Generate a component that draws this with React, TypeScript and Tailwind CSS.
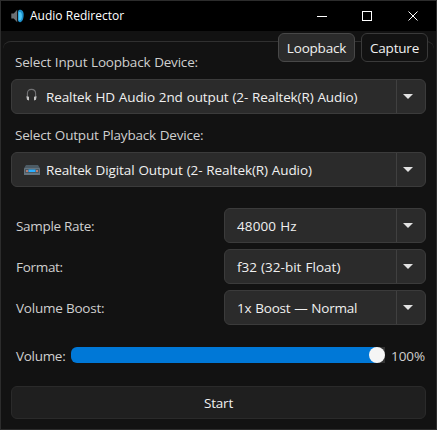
import type { ReactNode } from "react";

function SpeakerIcon() {
  return (
    <svg width="14" height="14" viewBox="0 0 14 14" className="shrink-0">
      <path d="M0.3 4.6h2.4L6.2 0.8v12.4L2.7 9.6H0.3z" fill="#6b7074" />
      <path d="M7 2.2C8.3 0 12 0.2 12.6 4.6c.4 4.2-1 8.6-3.5 8.6-1.4 0-2.1-1.2-2.1-2.2z" fill="#1c8fcb" />
      <path d="M7.6 3.2c2.4-1 3.4 1 3.3 4-.1 3-1.3 4.8-3.3 4.2z" fill="#4cc6f5" />
    </svg>
  );
}

function HeadphonesIcon() {
  return (
    <svg width="16" height="16" viewBox="0 0 16 16" className="relative -top-px shrink-0">
      <path d="M3.4 10V5.5C3.4 2.4 5 1.4 7.5 1.4s4.1 1 4.1 4.1V10" fill="none" stroke="#727274" strokeWidth="1.1" />
      <path d="M2.4 8.2l2.6.6v3.8l-2-.8zM12.6 8.2l-2.6.6v3.8l2-.8z" fill="#c2c2c2" />
    </svg>
  );
}

function DeckIcon() {
  return (
    <svg width="16" height="16" viewBox="0 0 16 16" className="shrink-0">
      <path d="M2 3h12l1.8 3H0.2z" fill="#4c5b65" />
      <rect x="0" y="6" width="16" height="7" rx="0.6" fill="#66747e" />
      <rect x="1" y="7" width="14" height="4" fill="#4b5962" />
      <rect x="4.5" y="7.5" width="7" height="2.5" fill="#2aaeff" />
      <rect x="2" y="8" width="2" height="2" fill="#b77b70" />
      <rect x="12" y="8" width="2" height="2" fill="#b77b70" />
    </svg>
  );
}

function Select({ icon, children }: { icon?: ReactNode; children: ReactNode }) {
  return (
    <div className="flex h-[35px] w-full rounded-[6px] border border-[#3b3b3b] bg-[#2b2b2b] text-[#f0f0f0]">
      <div className="flex flex-1 items-center gap-[6px] pl-[12px] whitespace-nowrap">
        {icon}
        <span>{children}</span>
      </div>
      <div className="flex w-[29px] items-center border-l border-[#404040] pl-[6px]">
        <svg width="10" height="5" viewBox="0 0 10 5">
          <path d="M0 0h10L5 5z" fill="#e2e2e2" />
        </svg>
      </div>
    </div>
  );
}

function Setting({ label, children }: { label: ReactNode; children: ReactNode }) {
  return (
    <div className="flex items-center pl-[5px]">
      <div className="w-[208px] shrink-0">{label}</div>
      <Select>{children}</Select>
    </div>
  );
}

export default function App() {
  return (
    <div className="relative h-[430px] w-[437px] overflow-hidden border border-[#2c2c2c] bg-[#121212] font-['Open_Sans','Noto_Sans',sans-serif] text-[13.5px] leading-[18px] text-[#cfcfcf]">
      <header className="flex h-[30px] items-center bg-black pl-[10px] text-white">
        <SpeakerIcon />
        <span className="ml-[5px] text-[12px] tracking-[0.01px]">Audio Redirector</span>
        <svg width="102" height="12" viewBox="0 0 102 12" className="mr-[17px] ml-auto" fill="none" stroke="white">
          <path d="M0 6.5h10" />
          <rect x="45.5" y="1.5" width="9" height="9" />
          <path d="M91.5 1.5l9 9M100.5 1.5l-9 9" />
        </svg>
      </header>

      <div className="absolute top-[40px] right-[2px] left-[2px] h-[8px] rounded-t-[8px] border-t border-[#303030]" />

      <main className="px-[10px] pt-[2px]">
        <div className="flex h-[46px] justify-between">
          <span className="pt-[20px] pl-[4px] tracking-[-0.2px] [word-spacing:0.5px]">Select Input Loopback Device:</span>
          <div className="relative mr-[-2px] flex h-[29px] gap-[6px] text-[#f0f0f0]">
            <button className="w-[77px] rounded-[6px] border border-[#484848] bg-[#2b2b2b] tracking-[-0.2px]">Loopback</button>
            <button className="w-[67px] rounded-[6px] border border-[#3a3a3a] bg-[#121212] tracking-[-0.2px]">Capture</button>
          </div>
        </div>
        <Select icon={<HeadphonesIcon />}>
          <span className="tracking-[-0.11px] [word-spacing:0.5px]">Realtek HD Audio 2nd output (2- Realtek(R) Audio)</span>
        </Select>
        <div className="h-[38px] pt-[12px] pl-[4px] tracking-[-0.2px] [word-spacing:0.5px]">Select Output Playback Device:</div>
        <Select icon={<DeckIcon />}>
          <span className="tracking-[-0.1px] [word-spacing:0.5px]">Realtek Digital Output (2- Realtek(R) Audio)</span>
        </Select>

        <div className="mt-[21px] flex flex-col gap-[6px]">
          <Setting label={<span className="tracking-[-0.3px]">Sample Rate:</span>}>
            <span className="tracking-[0.1px] [word-spacing:0.5px]">48000 Hz</span>
          </Setting>
          <Setting label={<span className="tracking-[-0.3px]">Format:</span>}>
            <span className="tracking-[0.02px] [word-spacing:0.5px]">f32 (32-bit Float)</span>
          </Setting>
          <Setting label={<span className="tracking-[-0.22px]">Volume Boost:</span>}>
            <span className="tracking-[-0.2px] [word-spacing:0.5px]">1x Boost — Normal</span>
          </Setting>
        </div>

        <div className="mt-[22px] flex h-[16px] items-center pl-[5px]">
          <span className="w-[55px] shrink-0 pt-[2px] tracking-[-0.3px]">Volume:</span>
          <div className="flex h-[16px] w-[314px] shrink-0 justify-end rounded-l-[6px] bg-linear-to-r from-[#0078d7] from-[306px] to-[#333333] to-[306px]">
            <div className="size-[16px] rounded-full bg-[#f5f5f5]" />
          </div>
          <span className="ml-[6px] pt-[2px] tracking-[-0.05px]">100%</span>
        </div>

        <button className="mt-[23px] block h-[33px] w-full rounded-[6px] border border-[#2a2a2a] bg-[#1f1f1f] tracking-[-0.2px] text-[#f0f0f0]">
          Start
        </button>
      </main>
    </div>
  );
}
